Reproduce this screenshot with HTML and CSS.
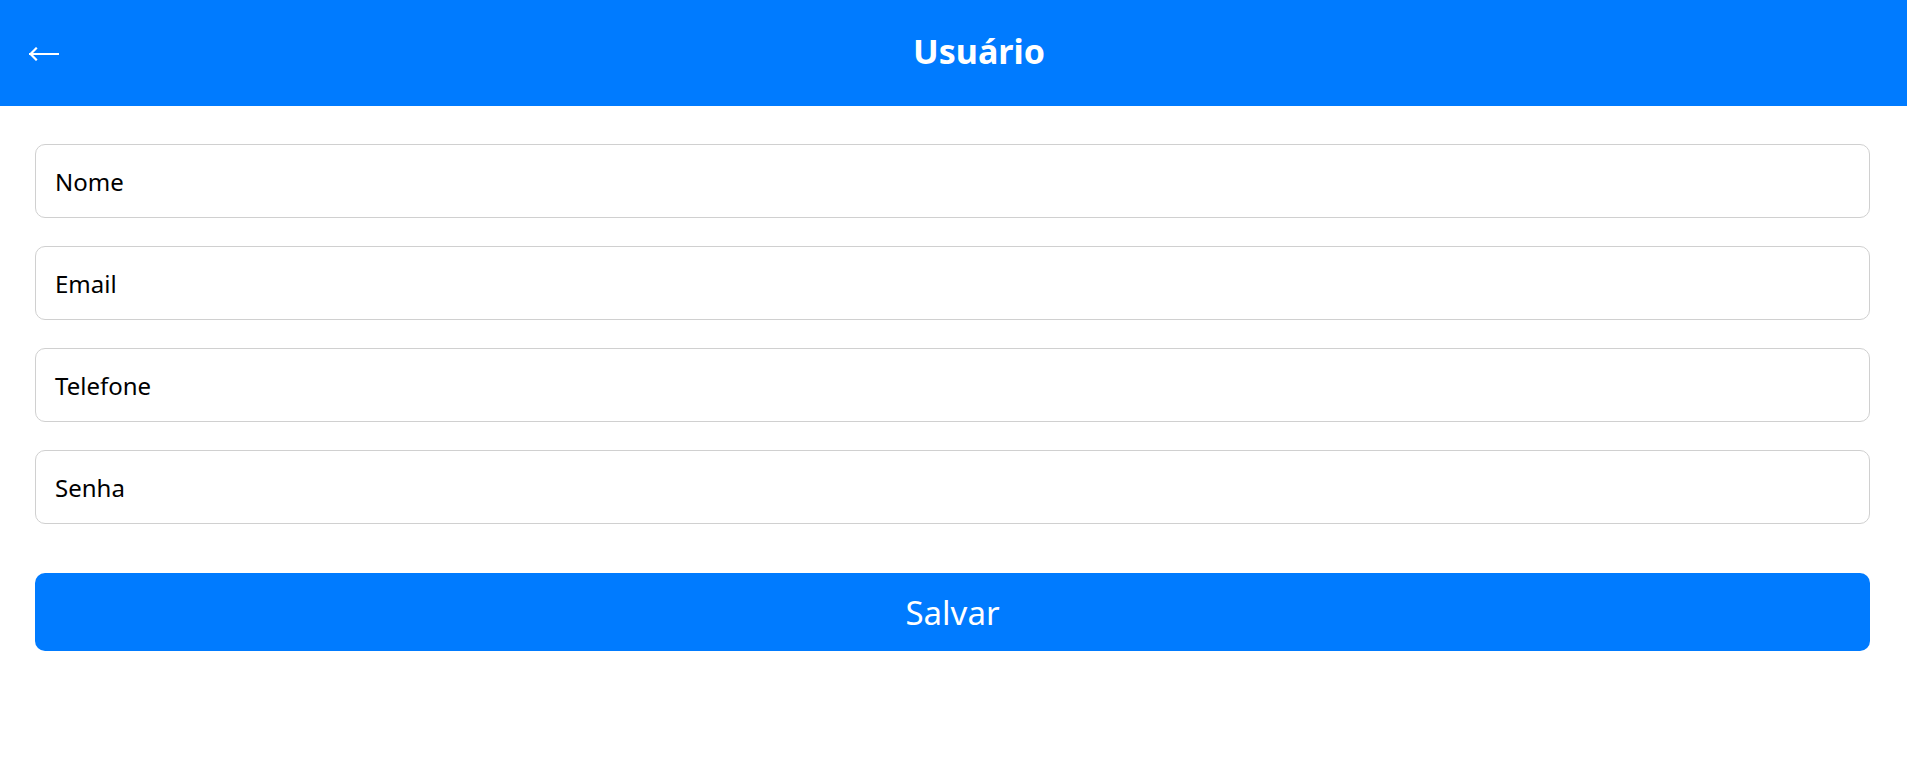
FILE: index.html
```html
<!DOCTYPE html>
<html lang="pt">
<head>
<meta charset="utf-8">
<title>Usuário</title>
<link rel="stylesheet" href="styles.css">
</head>
<body>
<header class="topbar">
  <button class="back" aria-label="Voltar">
    <svg width="30" height="14" viewBox="0 0 30 14"><path d="M1 7 H29 M7 1.5 L1.5 7 L7 12.5" fill="none" stroke="#fff" stroke-width="2.2" stroke-linecap="square"/></svg>
  </button>
  <h1 class="title">Usuário</h1>
</header>
<main class="form">
  <div class="field">Nome</div>
  <div class="field">Email</div>
  <div class="field">Telefone</div>
  <div class="field">Senha</div>
  <button class="save">Salvar</button>
</main>
</body>
</html>
```
FILE: styles.css
```css
* { box-sizing: border-box; }
html, body { margin: 0; padding: 0; background: #fff; }
body { font-family: "Noto Sans", "Open Sans", sans-serif; color: #000; }
.topbar {
  height: 106px;
  background: #007bff;
  display: flex;
  align-items: center;
  justify-content: center;
  position: relative;
}
.back {
  position: absolute;
  left: 29px;
  top: 47px;
  padding: 0;
  border: 0;
  background: none;
  display: flex;
}
.title {
  margin: 0 0 4px 51px;
  color: #fff;
  font-size: 34px;
  font-weight: 700;
  line-height: 1;
}
.form {
  padding: 38px 37px 0 35px;
  display: flex;
  flex-direction: column;
  gap: 28px;
}
.field {
  height: 74px;
  border: 1px solid #d0d0d0;
  border-radius: 10px;
  padding-left: 19px;
  display: flex;
  align-items: center;
  font-size: 24px;
}
.save {
  margin-top: 21px;
  height: 78px;
  border: 0;
  border-radius: 10px;
  background: #007bff;
  color: #fff;
  font-family: inherit;
  font-size: 33px;
}
```
